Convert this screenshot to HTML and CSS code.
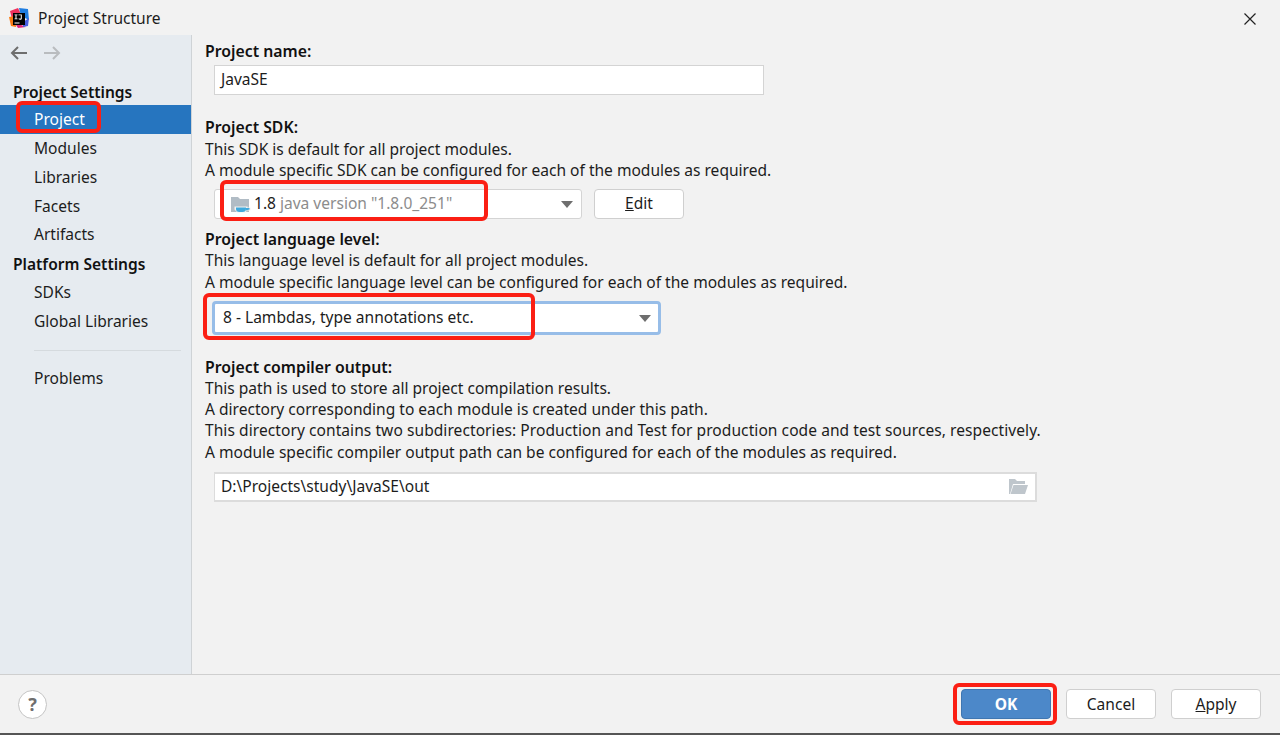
FILE: index.html
```html
<!DOCTYPE html>
<html lang="en">
<head>
<meta charset="utf-8">
<title>Project Structure</title>
<link rel="stylesheet" href="styles.css">
</head>
<body>
<div class="dialog">
  <header class="titlebar">
    <svg class="logo" width="20" height="20" viewBox="0 0 20 20">
      <path d="M1 3 L9 0 L12 6 L3 11Z" fill="#f0325e"/>
      <path d="M0 9 L6 8 L7 19 L2 18Z" fill="#f97a12"/>
      <path d="M10 0 L19 1 L20 12 L12 8Z" fill="#1f7de0"/>
      <path d="M5 14 L17 19 L9 20Z" fill="#e0267a"/>
      <path d="M14 14 L20 10 L19 18 L14 19Z" fill="#4a5fe0"/>
      <rect x="4" y="5" width="12" height="12" fill="#000"/>
      <rect x="5.500" y="14.500" width="5" height="1" fill="#fff"/>
      <path d="M5.500 6.500h3v.8h-1v3.200h1v.8h-3v-.8h1V7.300h-1zM9.500 6.500h3.300v3.700c0 1-.6 1.500-1.700 1.500-.7 0-1.300-.3-1.700-.8l.6-.6c.3.300.6.500 1 .5.500 0 .8-.2.800-.7V7.300h-2.300z" fill="#fff"/>
    </svg>
    <span class="title">Project Structure</span>
    <svg class="close" width="12" height="12" viewBox="0 0 12 12"><path d="M.5.500l11 11M11.500.500l-11 11" stroke="#222" stroke-width="1.200" fill="none"/></svg>
  </header>
  <div class="body">
    <nav class="sidebar">
      <div class="arrows">
        <svg width="18" height="14" viewBox="0 0 18 14"><path d="M17 7H2M8 1L2 7l6 6" stroke="#6e6e6e" stroke-width="2" fill="none"/></svg>
        <svg width="18" height="14" viewBox="0 0 18 14"><path d="M1 7h15M10 1l6 6-6 6" stroke="#b9bcbf" stroke-width="2" fill="none"/></svg>
      </div>
      <div class="group first">Project Settings</div>
      <div class="item selected">Project</div>
      <div class="item">Modules</div>
      <div class="item">Libraries</div>
      <div class="item">Facets</div>
      <div class="item">Artifacts</div>
      <div class="group platform">Platform Settings</div>
      <div class="item">SDKs</div>
      <div class="item">Global Libraries</div>
      <div class="rule"></div>
      <div class="item">Problems</div>
    </nav>
    <main class="content">
      <h3 class="label">Project name:</h3>
      <div class="field name">JavaSE</div>

      <h3 class="label sdk-label">Project SDK:</h3>
      <p class="line">This SDK is default for all project modules.</p>
      <p class="line">A module specific SDK can be configured for each of the modules as required.</p>
      <div class="row">
        <div class="field combo sdk">
          <svg class="sdk-icon" width="20" height="18" viewBox="0 0 20 18">
            <path d="M0 1h7l2 2h9v13H0z" fill="#b1bcc5"/>
            <path d="M3.500 10.500h13v1h3v3h-3.500l-1.500 2h-8l-3-3z" fill="#f2f2f2"/>
            <path d="M5 11.500h10v1.500a3.500 3 0 0 1-3.500 3h-3A3.500 3 0 0 1 5 13z" fill="#40a9dc"/>
            <path d="M15 12h3.500v1.500l-3.500 1z" fill="#40a9dc"/>
          </svg>
          <span>1.8</span><span class="muted">java version "1.8.0_251"</span>
          <i class="caret"></i>
        </div>
        <div class="button edit"><span><u>E</u>dit</span></div>
      </div>

      <h3 class="label lang-label">Project language level:</h3>
      <p class="line">This language level is default for all project modules.</p>
      <p class="line">A module specific language level can be configured for each of the modules as required.</p>
      <div class="field combo lang">
        <span>8 - Lambdas, type annotations etc.</span>
        <i class="caret"></i>
      </div>

      <h3 class="label out-label">Project compiler output:</h3>
      <p class="line out-first">This path is used to store all project compilation results.</p>
      <p class="line">A directory corresponding to each module is created under this path.</p>
      <p class="line wide">This directory contains two subdirectories: Production and Test for production code and test sources, respectively.</p>
      <p class="line">A module specific compiler output path can be configured for each of the modules as required.</p>
      <div class="field output">
        <span>D:\Projects\study\JavaSE\out</span>
        <svg class="open" width="19" height="15" viewBox="0 0 19 15">
          <path d="M0 0h6l2 2h8v3H4L1 15H0z" fill="#bfc6cc"/>
          <path d="M4.500 6H19l-3 9H1.500z" fill="#bfc6cc"/>
        </svg>
      </div>
    </main>
  </div>
  <footer class="footer">
    <div class="help">?</div>
    <div class="actions">
      <div class="button ok">OK</div>
      <div class="button">Cancel</div>
      <div class="button"><span><u>A</u>pply</span></div>
    </div>
  </footer>
</div>
<div class="mark m-project"></div>
<div class="mark m-sdk"></div>
<div class="mark m-lang"></div>
<div class="mark m-ok"></div>
</body>
</html>
```
FILE: styles.css
```css
* { box-sizing: border-box; }
html, body { margin: 0; height: 100%; }
body {
  position: relative;
  width: 1280px;
  height: 735px;
  overflow: hidden;
  background: #f2f2f2;
  color: #1c1c1c;
  font: 15.550px/21.400px "Noto Sans", "Open Sans", sans-serif;
}
.dialog {
  display: flex;
  flex-direction: column;
  height: 735px;
  border-bottom: 2px solid #555;
}
.titlebar {
  flex: 0 0 35px;
  display: flex;
  align-items: center;
  padding: 0 24px 0 9px;
}
.logo { margin-top: 1px; }
.title { margin-left: 9px; margin-top: 2px; }
.close { margin-left: auto; margin-top: 2px; }

.body { flex: 1; display: flex; min-height: 0; }
.sidebar {
  flex: 0 0 192px;
  background: #e6ebf0;
  border-right: 1px solid #cfd3d6;
}
.arrows {
  display: flex;
  gap: 15px;
  padding: 11px 0 0 10px;
  height: 35px;
}
.group {
  height: 29px;
  line-height: 29px;
  padding-left: 13px;
  font-weight: 600;
  color: #111;
}
.group.first { margin-top: 8px; height: 27px; }
.group.platform { line-height: 30px; }
.item {
  height: 28.800px;
  line-height: 28.800px;
  padding-left: 34px;
}
.item.selected { height: 29px; line-height: 29px; background: #2675bf; color: #fff; }
.rule {
  height: 1px;
  margin: 14px 10px 13px 34px;
  background: #d5dade;
}

.content { flex: 1; padding: 5px 0 0 13px; min-width: 0; }
.label { margin: 0; font-size: 15.800px; line-height: 22px; font-weight: 600; color: #111; }
.line { margin: 0; white-space: nowrap; }
.line.wide { letter-spacing: 0.060px; }
.sdk-label { margin-top: 21px; margin-bottom: 0.600px; }
.lang-label { margin-top: 9.500px; }
.out-label { margin-top: 21px; }
.out-first { margin-top: -0.600px; }

.field {
  position: relative;
  display: flex;
  align-items: center;
  margin-left: 9px;
  background: #fff;
  border: 1px solid #d4d4d4;
  white-space: nowrap;
}
.name { width: 550px; height: 30px; margin-top: 3px; padding-left: 6px; }
.row { display: flex; gap: 12px; margin-top: 7.400px; }
.combo .caret {
  position: absolute;
  top: 50%;
  margin-top: -3px;
  width: 0;
  height: 0;
  border-left: 6px solid transparent;
  border-right: 6px solid transparent;
  border-top: 7px solid #6e6e6e;
}
.sdk { width: 368px; height: 30px; padding-left: 16px; border-radius: 3px; }
.sdk .caret { right: 8px; }
.sdk-icon { margin-right: 3px; margin-top: 3px; }
.muted { color: #8c8c8c; margin-left: 4px; }
.edit { width: 90px; height: 30px; }
.lang {
  width: 449px;
  height: 34px;
  margin: 8px 0 0 7px;
  padding-left: 8px;
  border: 3px solid #97bde8;
  border-radius: 4px;
}
.lang .caret { right: 7px; }
.output {
  width: 823px;
  height: 30px;
  margin-top: 8.400px;
  padding-left: 6px;
  justify-content: space-between;
  padding-right: 7px;
  border: 2px solid #dcdcdc;
  border-left-width: 1px;
}

.button {
  display: flex;
  align-items: center;
  justify-content: center;
  width: 90px;
  height: 30px;
  padding-top: 1px;
  background: #fff;
  border: 1px solid #cfcfcf;
  border-radius: 4px;
}
.edit { padding-top: 0; }
.footer {
  flex: 0 0 59px;
  display: flex;
  align-items: center;
  justify-content: space-between;
  padding: 0 19px 0 18px;
  border-top: 1px solid #cfcfcf;
}
.help {
  width: 29px;
  height: 29px;
  margin-top: 1px;
  border: 1px solid #c4c4c4;
  border-radius: 50%;
  background: #fff;
  color: #6e6e6e;
  font-size: 18px;
  font-weight: 700;
  line-height: 26px;
  text-align: center;
}
.actions { display: flex; gap: 15px; }
.ok {
  background: #4c88c9;
  border-color: #3f76b1;
  color: #fff;
  font-weight: 700;
}

.mark {
  position: absolute;
  border: 4px solid #fb1f14;
  border-radius: 6px;
}
.m-project { left: 16px; top: 101px; width: 85px; height: 32px; }
.m-sdk { left: 220px; top: 180px; width: 268px; height: 41px; }
.m-lang { left: 203px; top: 293px; width: 332px; height: 47px; }
.m-ok { left: 953px; top: 683px; width: 104px; height: 42px; }
```
